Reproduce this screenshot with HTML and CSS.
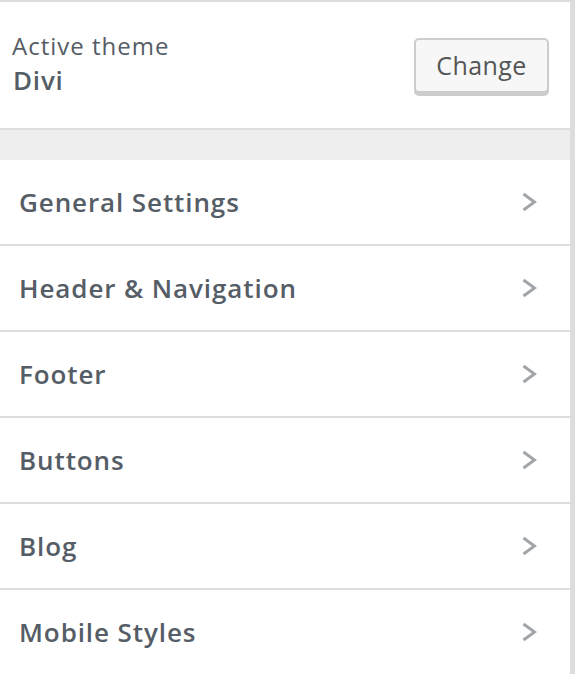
FILE: index.html
```html
<!DOCTYPE html>
<html lang="en">
<head>
  <meta charset="UTF-8">
  <title>Customize - Divi</title>
  <link rel="stylesheet" href="styles.css">
</head>
<body>

  <div class="panel">
    <div class="theme-info">
      <div class="theme-text">
        <span class="theme-label">Active theme</span>
        <span class="theme-name">Divi</span>
      </div>
      <button class="change-btn" type="button">Change</button>
    </div>

    <div class="spacer"></div>

    <ul class="sections">
      <li class="section-item">General Settings <svg class="chevron" viewBox="0 0 16 20"><path d="M2.5 2 L13.5 10 L2.5 18"/></svg></li>
      <li class="section-item">Header &amp; Navigation <svg class="chevron" viewBox="0 0 16 20"><path d="M2.5 2 L13.5 10 L2.5 18"/></svg></li>
      <li class="section-item">Footer <svg class="chevron" viewBox="0 0 16 20"><path d="M2.5 2 L13.5 10 L2.5 18"/></svg></li>
      <li class="section-item">Buttons <svg class="chevron" viewBox="0 0 16 20"><path d="M2.5 2 L13.5 10 L2.5 18"/></svg></li>
      <li class="section-item">Blog <svg class="chevron" viewBox="0 0 16 20"><path d="M2.5 2 L13.5 10 L2.5 18"/></svg></li>
      <li class="section-item">Mobile Styles <svg class="chevron" viewBox="0 0 16 20"><path d="M2.5 2 L13.5 10 L2.5 18"/></svg></li>
    </ul>
  </div>

</body>
</html>
```

FILE: styles.css
```css
html, body {
  margin: 0;
  height: 100%;
}

body {
  background-color: #dddddd;
  font-family: 'Open Sans', 'Noto Sans', sans-serif;
  color: #555d66;
  padding-top: 2px;
  box-sizing: border-box;
  overflow: hidden;
}

.panel {
  width: 570px;
  background-color: #ffffff;
  min-height: 100%;
}

.theme-info {
  display: flex;
  align-items: center;
  justify-content: space-between;
  height: 126px;
  padding: 0 21px 0 12px;
  border-bottom: 2px solid #dddddd;
}

.theme-text {
  display: flex;
  flex-direction: column;
  margin-top: -4px;
}

.theme-label {
  font-size: 24px;
  line-height: 34px;
  font-weight: 400;
  letter-spacing: 1px;
}

.theme-name {
  font-size: 26px;
  line-height: 34px;
  font-weight: 600;
  letter-spacing: 0.8px;
  padding-left: 1px;
}

.change-btn {
  width: 135px;
  height: 55px;
  font-family: inherit;
  font-size: 25px;
  letter-spacing: 0.4px;
  color: #555555;
  background-color: #f7f7f7;
  border: 2px solid #cccccc;
  border-radius: 5px;
  box-shadow: 0 3px 0 #cccccc;
  cursor: pointer;
}

.spacer {
  height: 30px;
  background-color: #eeeeee;
}

.sections {
  list-style: none;
  margin: 0;
  padding: 0;
}

.section-item {
  display: flex;
  align-items: center;
  justify-content: space-between;
  height: 84px;
  padding: 0 33px 0 19px;
  font-size: 26px;
  font-weight: 550;
  letter-spacing: 0.9px;
  border-bottom: 2px solid #dddddd;
}

.section-item:last-child {
  border-bottom: none;
}

.chevron {
  width: 16px;
  height: 20px;
  fill: none;
  stroke: #a0a5aa;
  stroke-width: 3;
}
```
